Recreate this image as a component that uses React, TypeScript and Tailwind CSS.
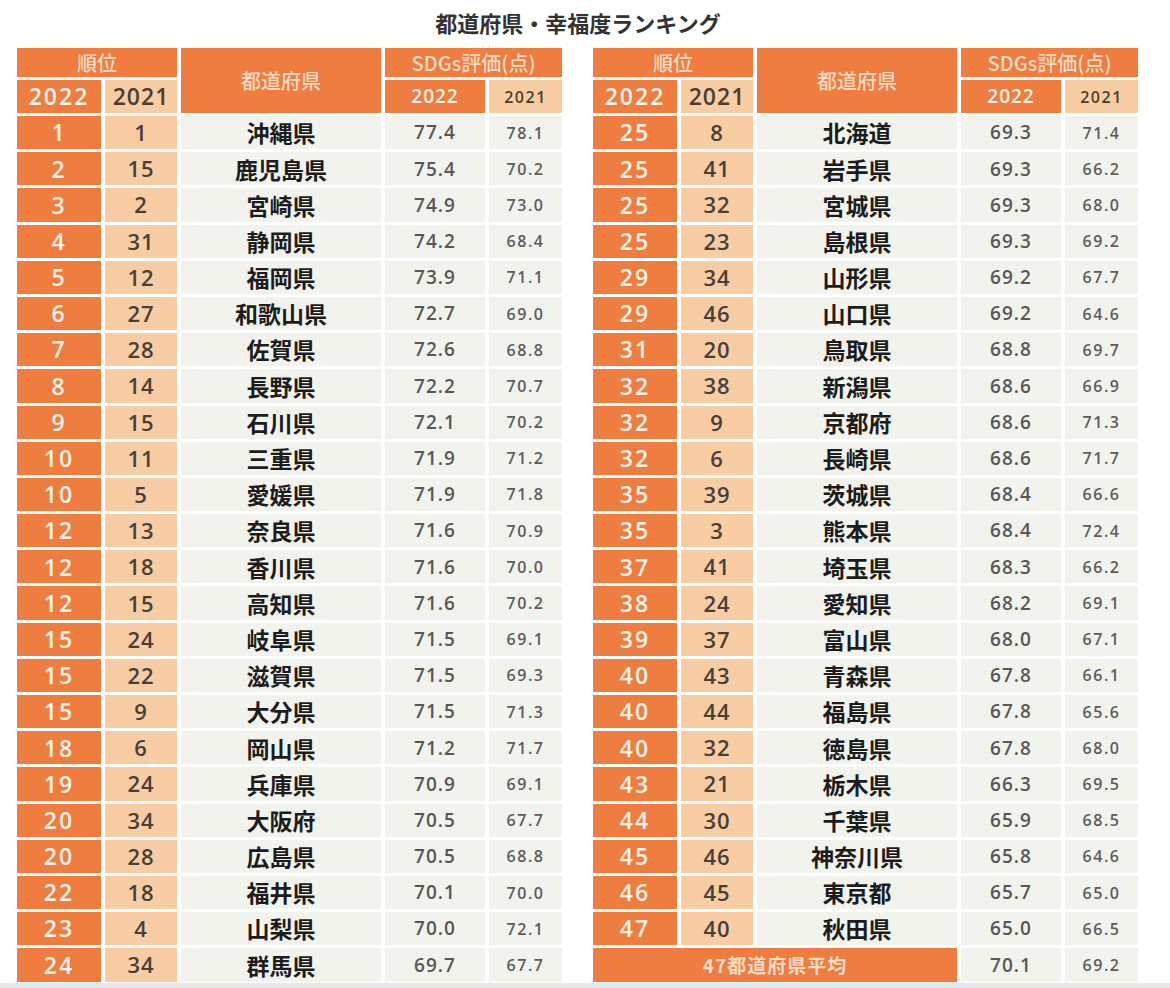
import React from "react";

type Row = [string, string, string, string, string];

const left: Row[] = [
  ["1", "1", "沖縄県", "77.4", "78.1"],
  ["2", "15", "鹿児島県", "75.4", "70.2"],
  ["3", "2", "宮崎県", "74.9", "73.0"],
  ["4", "31", "静岡県", "74.2", "68.4"],
  ["5", "12", "福岡県", "73.9", "71.1"],
  ["6", "27", "和歌山県", "72.7", "69.0"],
  ["7", "28", "佐賀県", "72.6", "68.8"],
  ["8", "14", "長野県", "72.2", "70.7"],
  ["9", "15", "石川県", "72.1", "70.2"],
  ["10", "11", "三重県", "71.9", "71.2"],
  ["10", "5", "愛媛県", "71.9", "71.8"],
  ["12", "13", "奈良県", "71.6", "70.9"],
  ["12", "18", "香川県", "71.6", "70.0"],
  ["12", "15", "高知県", "71.6", "70.2"],
  ["15", "24", "岐阜県", "71.5", "69.1"],
  ["15", "22", "滋賀県", "71.5", "69.3"],
  ["15", "9", "大分県", "71.5", "71.3"],
  ["18", "6", "岡山県", "71.2", "71.7"],
  ["19", "24", "兵庫県", "70.9", "69.1"],
  ["20", "34", "大阪府", "70.5", "67.7"],
  ["20", "28", "広島県", "70.5", "68.8"],
  ["22", "18", "福井県", "70.1", "70.0"],
  ["23", "4", "山梨県", "70.0", "72.1"],
  ["24", "34", "群馬県", "69.7", "67.7"],
];

const right: Row[] = [
  ["25", "8", "北海道", "69.3", "71.4"],
  ["25", "41", "岩手県", "69.3", "66.2"],
  ["25", "32", "宮城県", "69.3", "68.0"],
  ["25", "23", "島根県", "69.3", "69.2"],
  ["29", "34", "山形県", "69.2", "67.7"],
  ["29", "46", "山口県", "69.2", "64.6"],
  ["31", "20", "鳥取県", "68.8", "69.7"],
  ["32", "38", "新潟県", "68.6", "66.9"],
  ["32", "9", "京都府", "68.6", "71.3"],
  ["32", "6", "長崎県", "68.6", "71.7"],
  ["35", "39", "茨城県", "68.4", "66.6"],
  ["35", "3", "熊本県", "68.4", "72.4"],
  ["37", "41", "埼玉県", "68.3", "66.2"],
  ["38", "24", "愛知県", "68.2", "69.1"],
  ["39", "37", "富山県", "68.0", "67.1"],
  ["40", "43", "青森県", "67.8", "66.1"],
  ["40", "44", "福島県", "67.8", "65.6"],
  ["40", "32", "徳島県", "67.8", "68.0"],
  ["43", "21", "栃木県", "66.3", "69.5"],
  ["44", "30", "千葉県", "65.9", "68.5"],
  ["45", "46", "神奈川県", "65.8", "64.6"],
  ["46", "45", "東京都", "65.7", "65.0"],
  ["47", "40", "秋田県", "65.0", "66.5"],
];

const NUM = "font-['Open_Sans','Noto_Sans_CJK_JP',sans-serif]";
const JP = "font-['Noto_Sans_CJK_JP',sans-serif]";

const dark = "bg-[#ef7d40]";
const light = "bg-[#f9cda4]";
const pale = "bg-[#f3f3ee]";

function Header() {
  return (
    <>
      <div className={`${dark} col-span-2 h-[29px] flex items-center justify-center text-[20px] font-medium text-[#fcdcc4] ${JP}`}>
        順位
      </div>
      <div className={`${dark} row-span-2 flex items-center justify-center text-[20px] font-medium text-[#fcdcc4] ${JP}`}>
        都道府県
      </div>
      <div className={`${dark} col-span-2 h-[29px] flex items-center justify-center text-[20px] font-medium text-[#fcdcc4] ${JP}`}>
        SDGs評価(点)
      </div>
      <div className={`${dark} h-[33px] flex items-center justify-center text-[23px] font-semibold tracking-[2px] text-[#fff4ea] ${NUM}`}>
        2022
      </div>
      <div className={`${light} h-[33px] flex items-center justify-center text-[23px] font-semibold tracking-[1px] text-[#4a3e32] ${NUM}`}>
        2021
      </div>
      <div className={`${dark} h-[33px] flex items-center justify-center text-[19px] font-semibold tracking-[1px] text-[#fff4ea] ${NUM}`}>
        2022
      </div>
      <div className={`${light} h-[33px] flex items-center justify-center text-[16px] font-semibold tracking-[1.5px] text-[#4a3e32] ${NUM}`}>
        2021
      </div>
    </>
  );
}

function ScoreCells({ s22, s21 }: { s22: string; s21: string }) {
  return (
    <>
      <div className={`${pale} flex items-center justify-center text-[19px] font-semibold tracking-[1px] text-[#575757] ${NUM}`}>
        {s22}
      </div>
      <div className={`${pale} flex items-center justify-center text-[16px] font-semibold tracking-[1.5px] text-[#5c5c5c] ${NUM}`}>
        {s21}
      </div>
    </>
  );
}

function DataRow({ r }: { r: Row }) {
  return (
    <>
      <div className={`${dark} flex items-center justify-center text-[23px] font-semibold tracking-[2px] text-[#fff4ea] ${NUM}`}>
        {r[0]}
      </div>
      <div className={`${light} flex items-center justify-center text-[22px] font-semibold tracking-[1px] text-[#474038] ${NUM}`}>
        {r[1]}
      </div>
      <div className={`${pale} flex items-center justify-center text-[23px] font-bold text-[#1c1c1c] ${JP}`}>
        {r[2]}
      </div>
      <ScoreCells s22={r[3]} s21={r[4]} />
    </>
  );
}

function Table({ rows, average }: { rows: Row[]; average?: boolean }) {
  return (
    <div className="grid grid-cols-[84px_72px_200px_100px_73px] grid-rows-[29px_33px_repeat(24,33.2px)] gap-x-[4px] gap-y-[3px]">
      <Header />
      {rows.map((r, i) => (
        <DataRow key={i} r={r} />
      ))}
      {average && (
        <>
          <div className={`${dark} col-span-3 flex items-center justify-center text-[19px] font-semibold tracking-[1px] text-[#fcdcc4] ${JP}`}>
            47都道府県平均
          </div>
          <ScoreCells s22="70.1" s21="69.2" />
        </>
      )}
    </div>
  );
}

export default function App() {
  return (
    <div className="w-[1170px] h-[988px] bg-white overflow-hidden flex flex-col">
      <div className="pl-[17px] w-[1139px] flex flex-col flex-1">
        <div className={`h-[48px] flex items-center justify-center text-[22px] font-bold text-[#333333] pb-[3px] ${JP}`}>
          都道府県・幸福度ランキング
        </div>
        <div className="flex gap-[31px]">
          <Table rows={left} />
          <Table rows={right} average />
        </div>
      </div>
      <div className="h-[5px] bg-[#e8e8e8]" />
    </div>
  );
}
